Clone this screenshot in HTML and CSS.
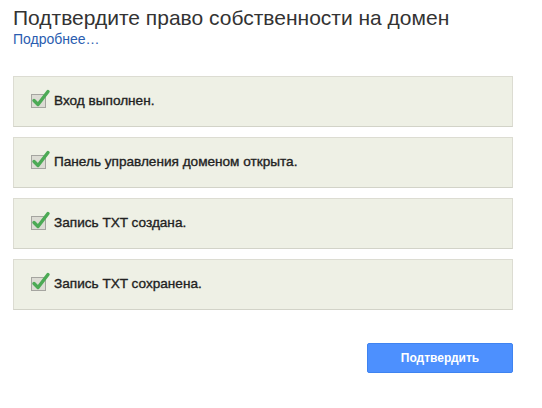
FILE: index.html
```html
<!DOCTYPE html>
<html lang="ru">
<head>
<meta charset="utf-8">
<link rel="stylesheet" href="styles.css">
</head>
<body>
<div class="page">
  <h1 class="title">Подтвердите право собственности на домен</h1>
  <a class="more" href="#">Подробнее…</a>
  <div class="steps">
    <div class="step">
      <svg class="check" width="22" height="20" viewBox="0 0 22 20"><rect x="1.5" y="5.5" width="14" height="13" fill="#dcdcd4" stroke="#a5a5a0"/><path d="M4 11.5 L8 15.5 L18 2.5" fill="none" stroke="#4caa55" stroke-width="3.4" stroke-linecap="round" stroke-linejoin="round"/></svg>
      <span class="label">Вход выполнен.</span>
    </div>
    <div class="step">
      <svg class="check" width="22" height="20" viewBox="0 0 22 20"><rect x="1.5" y="5.5" width="14" height="13" fill="#dcdcd4" stroke="#a5a5a0"/><path d="M4 11.5 L8 15.5 L18 2.5" fill="none" stroke="#4caa55" stroke-width="3.4" stroke-linecap="round" stroke-linejoin="round"/></svg>
      <span class="label">Панель управления доменом открыта.</span>
    </div>
    <div class="step">
      <svg class="check" width="22" height="20" viewBox="0 0 22 20"><rect x="1.5" y="5.5" width="14" height="13" fill="#dcdcd4" stroke="#a5a5a0"/><path d="M4 11.5 L8 15.5 L18 2.5" fill="none" stroke="#4caa55" stroke-width="3.4" stroke-linecap="round" stroke-linejoin="round"/></svg>
      <span class="label">Запись TXT создана.</span>
    </div>
    <div class="step">
      <svg class="check" width="22" height="20" viewBox="0 0 22 20"><rect x="1.5" y="5.5" width="14" height="13" fill="#dcdcd4" stroke="#a5a5a0"/><path d="M4 11.5 L8 15.5 L18 2.5" fill="none" stroke="#4caa55" stroke-width="3.4" stroke-linecap="round" stroke-linejoin="round"/></svg>
      <span class="label">Запись TXT сохранена.</span>
    </div>
  </div>
  <div class="actions">
    <button class="confirm">Подтвердить</button>
  </div>
</div>
</body>
</html>
```

FILE: styles.css
```css
html, body {
  margin: 0;
  padding: 0;
  background: #fff;
}
body {
  font-family: "Liberation Sans", Arial, sans-serif;
  color: #333;
}
.page {
  width: 500px;
  padding: 6px 0 0 13px;
}
.title {
  margin: 0;
  font-size: 21px;
  line-height: 24px;
  font-weight: normal;
  color: #333;
}
.more {
  display: block;
  margin-top: 2px;
  font-size: 14px;
  line-height: 15px;
  color: #2a5db0;
  text-decoration: none;
}
.steps {
  margin-top: 29px;
  display: flex;
  flex-direction: column;
  gap: 10px;
}
.step {
  height: 49px;
  box-sizing: content-box;
  background: #eef0e5;
  border: 1px solid #dcdcd2;
  border-bottom-color: #d2d3c8;
  display: flex;
  align-items: center;
  padding: 0 0 0 16px;
}
.check {
  display: block;
  margin-top: -6px;
  margin-right: 2px;
}
.label {
  font-size: 13.6px;
  font-weight: normal;
  color: #222;
  -webkit-text-stroke: 0.35px #222;
  margin-top: -2px;
}
.actions {
  margin-top: 33px;
  display: flex;
  justify-content: flex-end;
}
.confirm {
  width: 146px;
  height: 30px;
  background: #4d90fe;
  border: 1px solid #3f83f0;
  border-radius: 2px;
  color: #fff;
  font-family: "Liberation Sans", Arial, sans-serif;
  font-size: 12px;
  font-weight: bold;
  padding: 0;
}
```
